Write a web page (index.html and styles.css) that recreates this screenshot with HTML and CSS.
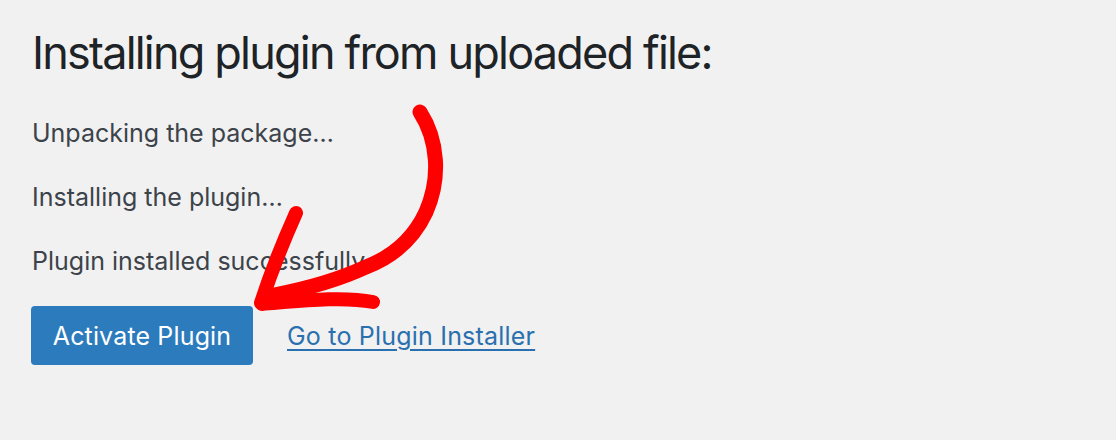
FILE: index.html
```html
<!DOCTYPE html>
<html lang="en">
<head>
<meta charset="utf-8">
<title>Installing plugin</title>
<link rel="stylesheet" href="styles.css">
</head>
<body>
<main class="wrap">
  <h1 class="title">Installing plugin from uploaded file:</h1>
  <p class="step">Unpacking the package…</p>
  <p class="step">Installing the plugin…</p>
  <p class="step">Plugin installed successfully.</p>
  <div class="actions">
    <a class="button" href="#">Activate Plugin</a>
    <a class="link" href="#">Go to Plugin Installer</a>
  </div>
  <svg class="arrow" width="1116" height="440" viewBox="0 0 1116 440" aria-hidden="true">
    <path d="M420 112 C438 140 441 178 426 212 C413 240 392 257 366 267 C338 280 305 289 274 295" fill="none" stroke="#ff0000" stroke-width="15" stroke-linecap="round"/>
    <path d="M296 213 C283 242 270 275 261 303" fill="none" stroke="#ff0000" stroke-width="14" stroke-linecap="round"/>
    <path d="M262 304 C300 301 342 296 373 302" fill="none" stroke="#ff0000" stroke-width="14" stroke-linecap="round"/>
  </svg>
</main>
</body>
</html>
```

FILE: styles.css
```css
html, body {
  margin: 0;
  padding: 0;
  background: #f1f1f1;
}
body {
  width: 1116px;
  height: 440px;
  overflow: hidden;
  font-family: Inter, "Noto Sans", sans-serif;
}
.wrap {
  position: relative;
  height: 440px;
  padding: 0 0 0 32px;
  box-sizing: border-box;
  display: flex;
  flex-direction: column;
  align-items: flex-start;
}
.title {
  margin: 25px 0 0 0;
  font-size: 45px;
  font-weight: 400;
  line-height: 56px;
  letter-spacing: -1.8px;
  color: #1d2327;
}
.step {
  margin: 0;
  font-size: 25px;
  line-height: 64px;
  color: #3c434a;
}
.step:first-of-type {
  margin-top: 20px;
}
.actions {
  margin-top: 13px;
  display: flex;
  align-items: center;
  gap: 34px;
}
.button {
  display: inline-flex;
  align-items: center;
  justify-content: center;
  width: 222px;
  height: 59px;
  margin-left: -1px;
  background: #2c7bbd;
  border-radius: 4px;
  color: #ffffff;
  font-size: 25px;
  letter-spacing: 0.15px;
  text-decoration: none;
}
.link {
  font-size: 25px;
  letter-spacing: 0.2px;
  color: #2a70ae;
  text-decoration: underline;
  text-decoration-thickness: 1.5px;
  text-underline-offset: 4px;
}
.arrow {
  position: absolute;
  left: 0;
  top: 0;
  pointer-events: none;
}
```
